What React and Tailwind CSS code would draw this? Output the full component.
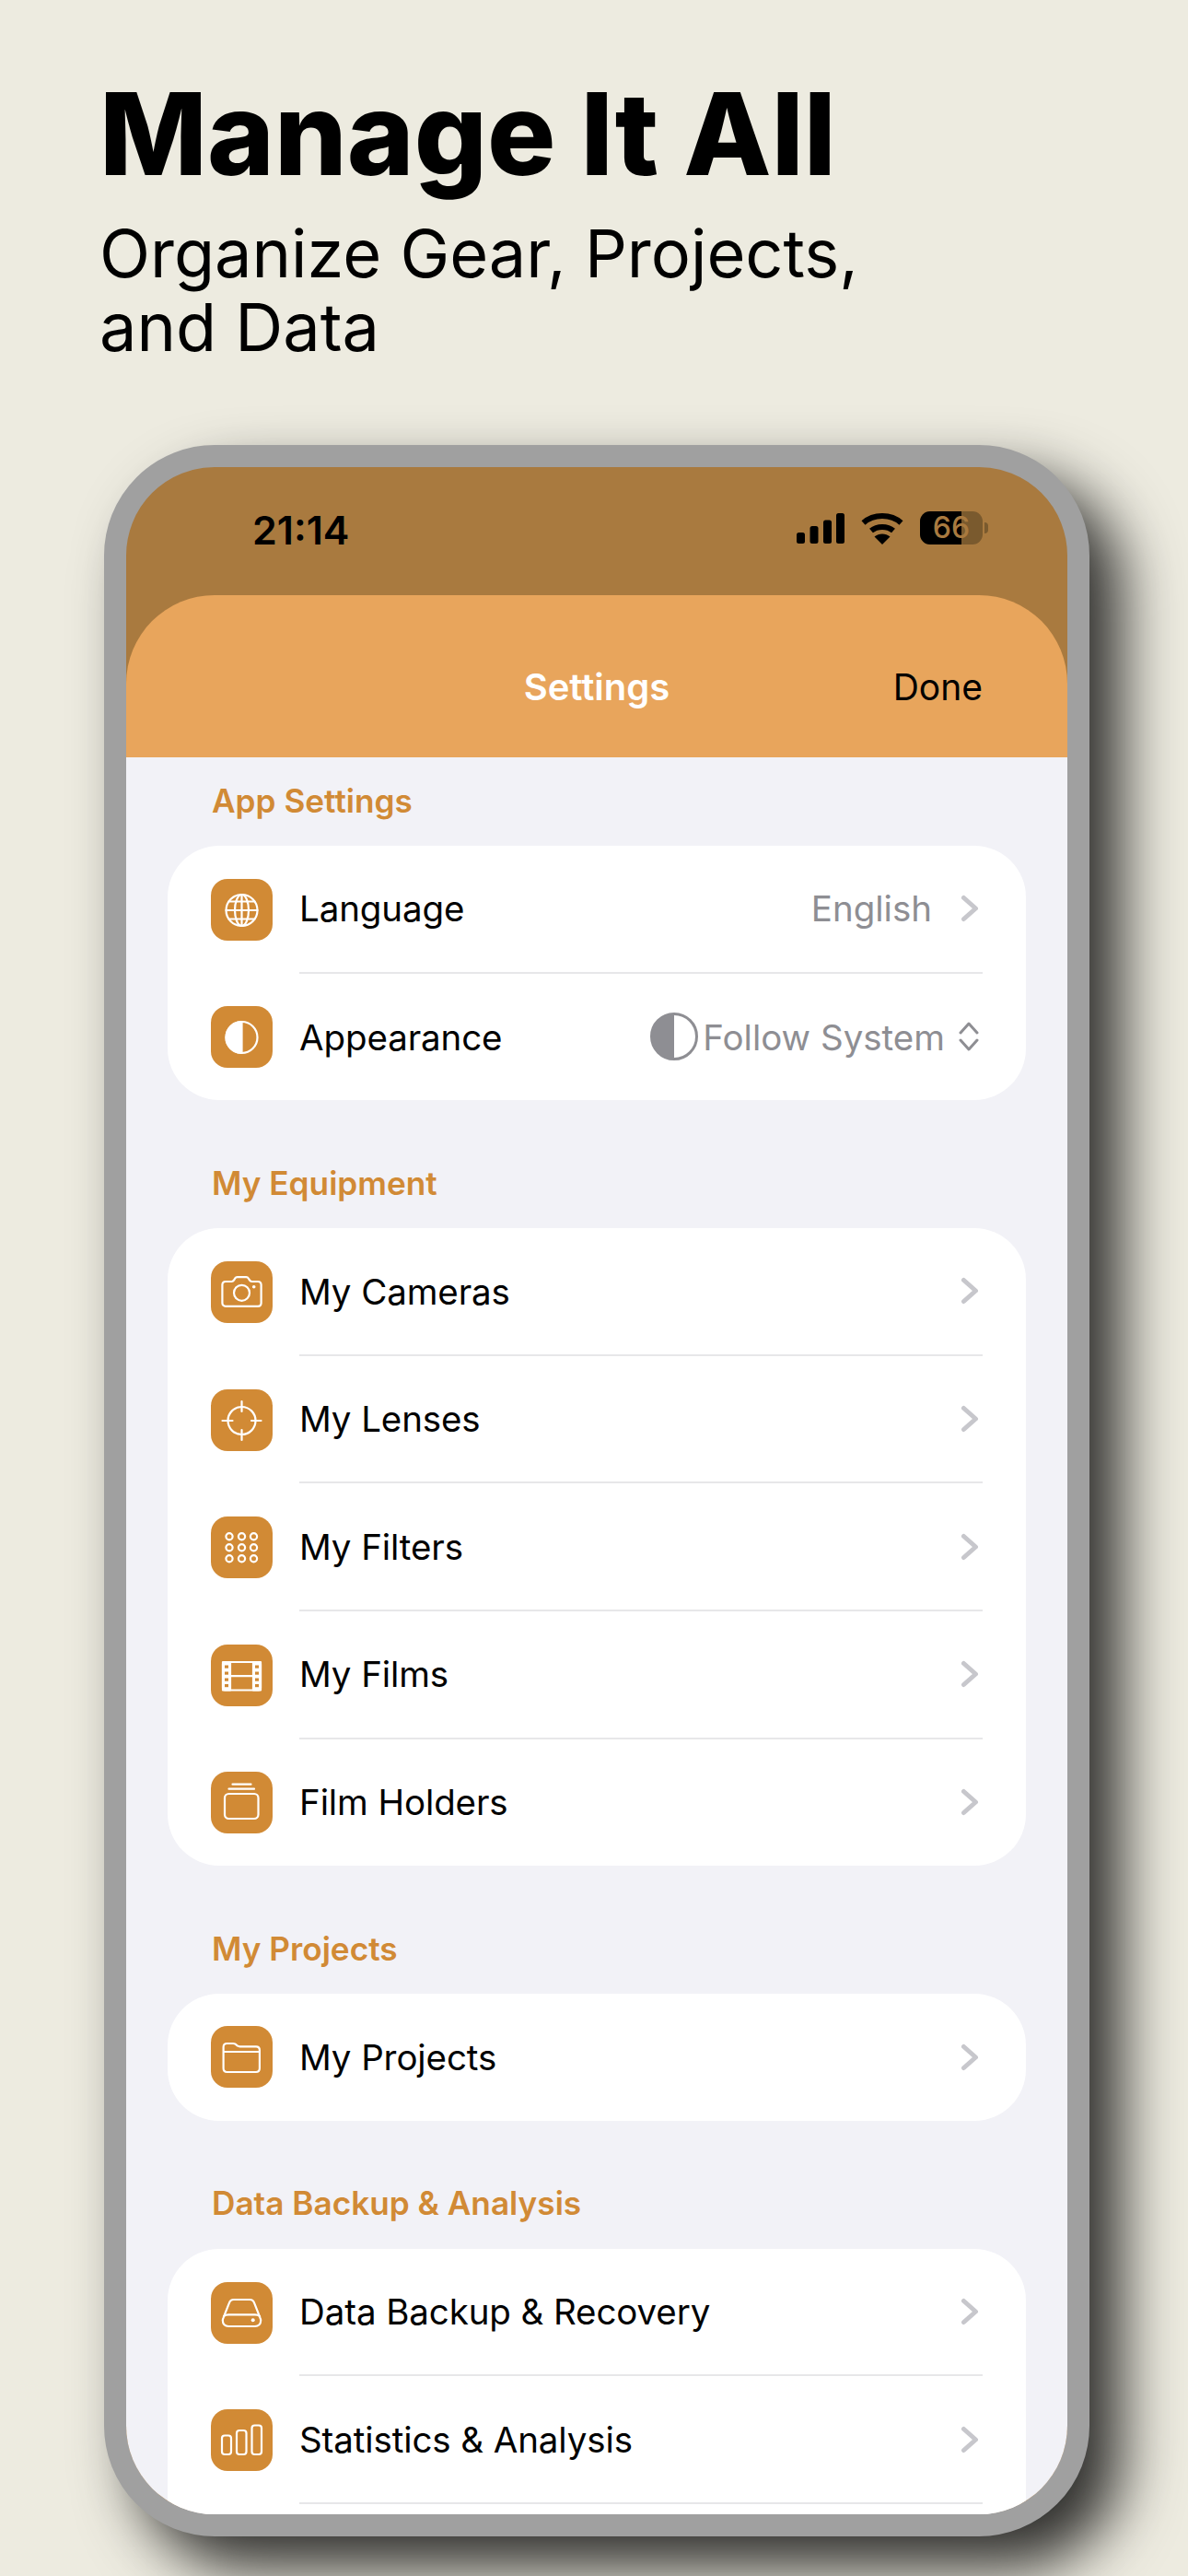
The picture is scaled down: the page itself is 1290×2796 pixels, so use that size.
const font = { fontFamily: 'Inter, sans-serif' };

function Tile({ children }) {
  return (
    <div className="w-[67px] h-[67px] rounded-[18px] bg-[#D18A35] shrink-0">
      <svg viewBox="0 0 67 67" className="w-full h-full" fill="none" stroke="white" strokeWidth="2.2" strokeLinecap="round" strokeLinejoin="round">
        {children}
      </svg>
    </div>
  );
}

const icons = {
  globe: (
    <>
      <circle cx="33.5" cy="34" r="17" />
      <ellipse cx="33.5" cy="34" rx="7.5" ry="17" />
      <path d="M33.5 17v34M16.5 34h34M19.5 24.5h28M19.5 43.5h28" />
    </>
  ),
  half: (
    <>
      <circle cx="33.5" cy="34" r="17" />
      <path d="M33.5 17a17 17 0 0 0 0 34z" fill="white" />
    </>
  ),
  camera: (
    <>
      <path d="M16 22h6.5c1.2 0 2-.6 2.6-1.6l1-1.7c.6-1 1.4-1.6 2.6-1.6h9.6c1.2 0 2 .6 2.6 1.6l1 1.700c.6 1 1.400 1.600 2.600 1.600H51c2.200 0 3.600 1.400 3.600 3.600v19.600c0 2.200-1.400 3.600-3.600 3.600H16c-2.200 0-3.600-1.400-3.600-3.600V25.600c0-2.200 1.400-3.600 3.600-3.600z" />
      <circle cx="33.5" cy="34.3" r="8.5" />
      <circle cx="46.7" cy="27.7" r="1.8" fill="white" stroke="none" />
    </>
  ),
  lens: (
    <>
      <circle cx="33.5" cy="34" r="15" />
      <path d="M12.5 34h11M44 34h10.500M33.500 13v11M33.500 44v11" />
    </>
  ),
  filters: (
    <>
      {[21.7, 33.7, 45.7].map((y) =>
        [20, 33.5, 46.5].map((x) => <circle key={`${x}-${y}`} cx={x} cy={y} r="3.6" />)
      )}
    </>
  ),
  film: (
    <>
      <rect x="13" y="19" width="41" height="30.5" rx="2.5" />
      <path d="M13 19h8v30.500h-8zM46 19h8v30.500h-8z" fill="white" />
      <path d="M21 34.200h25" />
      {[22.5, 29.5, 36.5, 43].map((y) => (
        <g key={y} fill="#D18A35" stroke="none">
          <rect x="15" y={y} width="4" height="3.2" />
          <rect x="48" y={y} width="4" height="3.2" />
        </g>
      ))}
    </>
  ),
  holder: (
    <>
      <rect x="15" y="24" width="36.5" height="27" rx="4.5" />
      <path d="M19.5 18.700h27.500M23.500 13.700h20" />
    </>
  ),
  folder: (
    <>
      <path d="M17.500 19h6.500c1.400 0 2.300.4 3.300 1.200l1 .9c1 .8 1.900 1.200 3.300 1.200h17.400c2.400 0 3.900 1.500 3.900 3.900v19.900c0 2.400-1.500 3.900-3.900 3.900H17.500c-2.400 0-3.900-1.500-3.900-3.900V22.900c0-2.400 1.500-3.900 3.900-3.900z" />
      <path d="M14 28h38.500" />
    </>
  ),
  drive: (
    <>
      <path d="M12.800 41.500c0-1 .3-1.900.8-2.800l6.300-16c.8-2.500 2.300-3.700 4.900-3.700h17.400c2.600 0 4.100 1.200 4.900 3.700l6.300 16c.5.900.8 1.800.8 2.800 0 3.800-2.500 6.500-6.300 6.500H19.100c-3.800 0-6.300-2.700-6.300-6.500z" />
      <path d="M14 37c1.400-1.200 3-1.700 5.100-1.700h28.800c2.100 0 3.700.5 5.100 1.700" />
      <circle cx="45.7" cy="41.2" r="2" fill="white" stroke="none" />
    </>
  ),
  stats: (
    <>
      <rect x="12" y="28.5" width="10" height="20.5" rx="3" />
      <rect x="28" y="23" width="10.5" height="26" rx="3" />
      <rect x="44.5" y="17.5" width="10.5" height="31.5" rx="3" />
    </>
  ),
};

function Chevron() {
  return (
    <svg width="20" height="30" viewBox="0 0 20 30" fill="none" stroke="#C7C7CC" strokeWidth="5" strokeLinecap="round" strokeLinejoin="round">
      <path d="M3.500 3.500 16.500 15 3.500 26.500" />
    </svg>
  );
}

function Row({ icon, label, right, last }) {
  return (
    <div className={`flex items-center pl-[47px] ${last ? 'h-[137.6px]' : 'h-[138.6px]'}`}>
      <Tile>{icons[icon]}</Tile>
      <div className={`ml-[29px] mr-[47px] flex-1 h-full flex items-center justify-between ${last ? '' : 'border-b-[2.5px] border-[#E7E7E9]'}`}>
        <span className="pt-[2px] text-[38.5px] text-black tracking-[-0.1px]">{label}</span>
        {right || (
          <div className="pr-[4px]">
            <Chevron />
          </div>
        )}
      </div>
    </div>
  );
}

function Section({ title, children }) {
  return (
    <section>
      <div className="h-[96px] pb-[2px] pl-[48px] flex items-center text-[35.2px] font-semibold text-[#D18A35]">{title}</div>
      <div className="bg-white rounded-[56px] overflow-hidden">{children}</div>
    </section>
  );
}

export default function App() {
  return (
    <div className="w-[1290px] h-[2796px] bg-[#EDEBE0] overflow-hidden" style={font}>
      {/* Titulo */}
      <div className="pt-[80px] pl-[108px] text-black">
        <h1 className="text-[124px] leading-[130px] font-extrabold">Manage It All</h1>
        <p className="mt-[25px] text-[72px] leading-[80px] font-normal">
          Organize Gear, Projects,
          <br />
          and Data
        </p>
      </div>

      {/* Telefone */}
      <div className="mt-[88px] ml-[113px] w-[1070px] h-[2270px] rounded-[120px] border-[24px] border-[#A0A0A0] bg-[#A97A3F] overflow-hidden shadow-[35px_35px_65px_rgba(0,0,0,0.8)] flex flex-col">
        {/* Status bar */}
        <div className="h-[139px] shrink-0 flex items-start justify-between pt-[47px] pl-[137px] pr-[86px]">
          <span className="text-[43px] leading-[43px] font-semibold text-black">21:14</span>
          <div className="flex items-start gap-[18px] pt-[3px]">
            <svg width="52" height="33" viewBox="0 0 52 33" fill="black">
              <rect x="0" y="21" width="9" height="12" rx="2.5" />
              <rect x="14.5" y="14" width="9" height="19" rx="2.5" />
              <rect x="29" y="7.5" width="9" height="25.5" rx="2.5" />
              <rect x="43" y="0" width="9" height="33" rx="2.5" />
            </svg>
            <svg width="46" height="34" viewBox="0 0 46 34" fill="none" stroke="black" strokeWidth="6">
              <path d="M2.500 10.500C13.500 .5 32.500 .5 43.500 10.500" />
              <path d="M11 19C17.500 13.500 28.500 13.500 35 19" />
              <path d="M23 34 14.500 25.500C19.500 21.500 26.500 21.500 31.500 25.500Z" fill="black" stroke="none" />
            </svg>
            <div className="flex items-center -mt-[2px] gap-[2px]">
              <div className="relative w-[68px] h-[36px] rounded-[11px] bg-[#7A5A2E]">
                <div className="absolute inset-y-0 left-0 w-[45px] rounded-l-[11px] bg-black" />
                <span className="absolute inset-0 flex items-center justify-center text-[32px] leading-none font-medium text-[#A97A3F]">66</span>
              </div>
              <div className="w-[4px] h-[12px] rounded-r-[4px] bg-[#7A5A2E]" />
            </div>
          </div>
        </div>

        {/* Cabecalho */}
        <div className="h-[176px] shrink-0 bg-[#E8A55C] rounded-t-[96px] grid grid-cols-3 items-center pt-[24px] px-[92px]">
          <span />
          <span className="text-center text-[40px] font-semibold text-white">Settings</span>
          <span className="text-right text-[39px] text-black">Done</span>
        </div>

        {/* Lista */}
        <div className="flex-1 min-h-0 bg-[#F2F2F7] overflow-hidden px-[45px] flex flex-col gap-[43px]">
          <Section title="App Settings">
            <Row
              icon="globe"
              label="Language"
              right={
                <div className="flex items-center gap-[31px] pr-[4px]">
                  <span className="pt-[2px] text-[38.5px] text-[#8E8E93]">English</span>
                  <Chevron />
                </div>
              }
            />
            <Row
              icon="half"
              label="Appearance"
              last
              right={
                <div className="flex items-center pr-[4px]">
                  <svg width="52" height="52" viewBox="0 0 52 52" className="mr-[5px]">
                    <circle cx="26" cy="26" r="24.500" fill="white" stroke="#8E8E93" strokeWidth="3" />
                    <path d="M26 1.500a24.500 24.500 0 0 0 0 49z" fill="#8E8E93" />
                  </svg>
                  <span className="pt-[2px] text-[38.5px] text-[#8E8E93]">Follow System</span>
                  <svg width="22" height="32" viewBox="0 0 22 32" fill="none" stroke="#8E8E93" strokeWidth="3" strokeLinecap="round" strokeLinejoin="round" className="ml-[15px]">
                    <path d="M2 12 11 2l9 10M2 20l9 10 9-10" />
                  </svg>
                </div>
              }
            />
          </Section>

          <Section title="My Equipment">
            <Row icon="camera" label="My Cameras" />
            <Row icon="lens" label="My Lenses" />
            <Row icon="filters" label="My Filters" />
            <Row icon="film" label="My Films" />
            <Row icon="holder" label="Film Holders" last />
          </Section>

          <Section title="My Projects">
            <Row icon="folder" label="My Projects" last />
          </Section>

          <Section title="Data Backup & Analysis">
            <Row icon="drive" label="Data Backup & Recovery" />
            <Row icon="stats" label="Statistics & Analysis" />
            <div className="h-[139px]" />
          </Section>
        </div>
      </div>
    </div>
  );
}
